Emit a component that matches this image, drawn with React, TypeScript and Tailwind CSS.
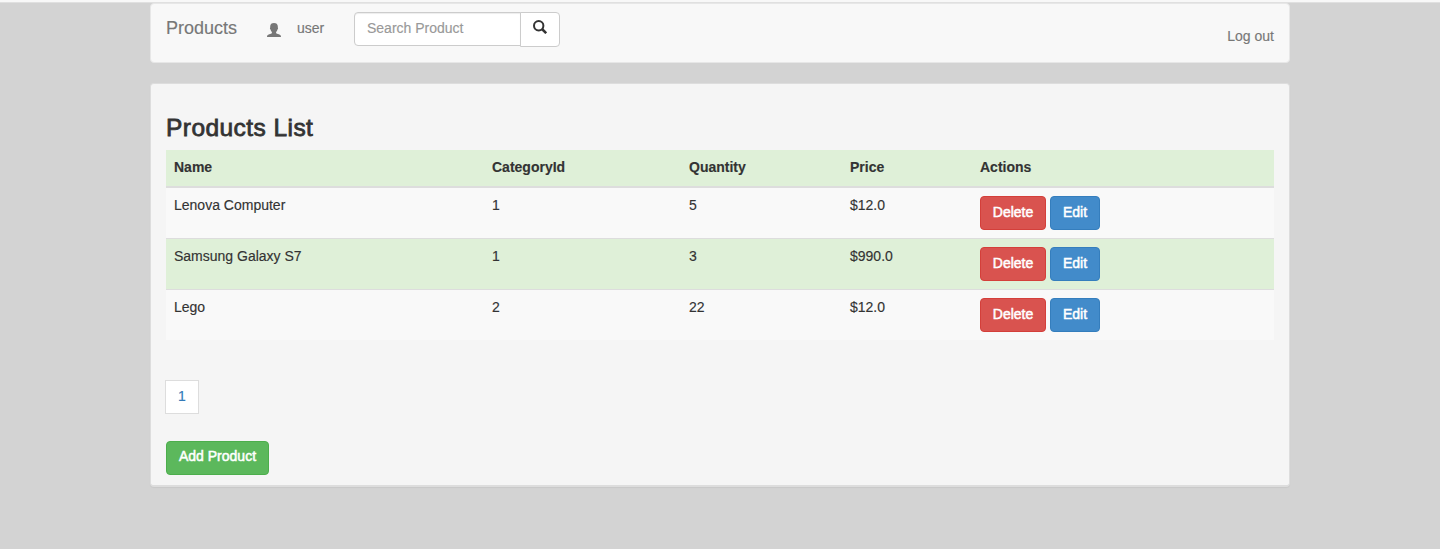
import React from "react";

type Product = { name: string; categoryId: number; quantity: number; price: string };

const products: Product[] = [
  { name: "Lenova Computer", categoryId: 1, quantity: 5, price: "$12.0" },
  { name: "Samsung Galaxy S7", categoryId: 1, quantity: 3, price: "$990.0" },
  { name: "Lego", categoryId: 2, quantity: 22, price: "$12.0" },
];

const buttonBase =
  "h-[34px] rounded border text-center text-white [-webkit-text-stroke:0.5px_white] whitespace-nowrap";

function UserIcon() {
  return (
    <svg className="h-[14px] w-[14px]" viewBox="0 0 14 14" fill="#777">
      <path d="M7 0C4.700 0 3.200 1.200 3.200 3.300V4.600C2.700 5 2.900 6.200 3.500 6.600C3.800 7.800 4.300 8.500 4.900 9V9.900C4.500 10.500 3.500 10.800 2.200 11.200C.6 11.700 0 12.200 0 14H14C14 12.200 13.400 11.700 11.800 11.200C10.500 10.800 9.500 10.500 9.100 9.900V9C9.700 8.500 10.200 7.800 10.500 6.600C11.100 6.200 11.300 5 10.800 4.600V3.300C10.800 1.200 9.300 0 7 0Z" />
    </svg>
  );
}

function SearchIcon() {
  return (
    <svg className="h-[14px] w-[14px]" viewBox="0 0 14 14" fill="none" stroke="#333">
      <circle cx="5.7" cy="5.7" r="4.7" strokeWidth="2" />
      <path d="M9 9 13.200 13.200" strokeWidth="2.5" strokeLinecap="butt" />
    </svg>
  );
}

function Navbar() {
  return (
    <nav className="flex h-[60px] items-start rounded border border-[#e7e7e7] bg-[#f8f8f8] px-[15px] text-[#777]">
      <a className="mt-[14px] w-[101px] text-[18px] leading-5">Products</a>
      <span className="mt-[19px] w-[30px]">
        <UserIcon />
      </span>
      <span className="mt-[14px] w-[57px] leading-5">user</span>
      <form className="mt-2 flex items-start">
        <input
          type="text"
          placeholder="Search Product"
          className="h-[34px] w-[167px] rounded-l border border-[#ccc] bg-white pb-[2px] pl-3 shadow-[inset_0_1px_1px_rgba(0,0,0,0.075)] outline-none placeholder:text-[#999]"
        />
        <button type="button" aria-label="Search" className="-ml-px flex h-[35px] w-[40px] justify-center rounded-r border border-[#ccc] bg-white pt-[7px]">
          <SearchIcon />
        </button>
      </form>
      <a className="mt-[22px] ml-auto leading-5">Log out</a>
    </nav>
  );
}

function ProductTable() {
  return (
    <table className="mt-[9px] w-[1108px] table-fixed border-separate border-spacing-0 text-left">
      <colgroup>
        <col className="w-[318px]" />
        <col className="w-[197px]" />
        <col className="w-[161px]" />
        <col className="w-[130px]" />
        <col className="w-[302px]" />
      </colgroup>
      <thead>
        <tr className="h-[38px] bg-[#dff0d8]">
          {["Name", "CategoryId", "Quantity", "Price", "Actions"].map((title) => (
            <th key={title} className="border-b-2 border-[#ddd] px-2 pt-[7px] align-top font-bold leading-5">
              {title}
            </th>
          ))}
        </tr>
      </thead>
      <tbody className="[&_td]:border-[#ddd] [&_td]:px-2 [&_td]:pt-[7px] [&_td]:align-top [&_td]:leading-5 [&_tr:not(:last-child)_td]:border-b">
        {products.map((product, index) => (
          <tr
            key={product.name}
            className={`${index === 1 ? "bg-[#dff0d8]" : "bg-[#f9f9f9]"} ${index === products.length - 1 ? "h-[50px]" : "h-[51px]"}`}
          >
            <td>{product.name}</td>
            <td>{product.categoryId}</td>
            <td>{product.quantity}</td>
            <td>{product.price}</td>
            <td>
              <div className="mt-px flex gap-1">
                <button className={`${buttonBase} w-[66px] border-[#d43f3a] bg-[#d9534f] pb-[2px]`}>Delete</button>
                <button className={`${buttonBase} w-[50px] border-[#357ebd] bg-[#428bca] pb-[2px]`}>Edit</button>
              </div>
            </td>
          </tr>
        ))}
      </tbody>
    </table>
  );
}

export default function App() {
  return (
    <div className="h-[549px] bg-[#d3d3d3] font-['Liberation_Sans',Arial,sans-serif] text-[14px] text-[#333] [-webkit-text-stroke-width:0.15px]">
      <div className="h-[3px] border-b border-[#e0e0e0] bg-[#f8f8f8]" />
      <div className="mx-auto w-[1140px]">
        <Navbar />
        <main className="mt-5 h-[404px] rounded border border-b-2 border-[#ddd] bg-[#f5f5f5] px-[15px] pt-[31px] shadow-[0_1px_1px_rgba(0,0,0,0.05)]">
          <h3 className="text-[24.5px] leading-[26px] tracking-[0.44px] [-webkit-text-stroke:0.8px_#333]">Products List</h3>
          <ProductTable />
          <div className="mt-10 -ml-px h-[34px] w-[34px] border border-[#ddd] bg-white text-center leading-[31px] text-[#337ab7]">
            1
          </div>
          <button className={`${buttonBase} mt-[27px] w-[103px] border-[#4cae4c] bg-[#5cb85c] pb-[4px]`}>Add Product</button>
        </main>
      </div>
    </div>
  );
}
